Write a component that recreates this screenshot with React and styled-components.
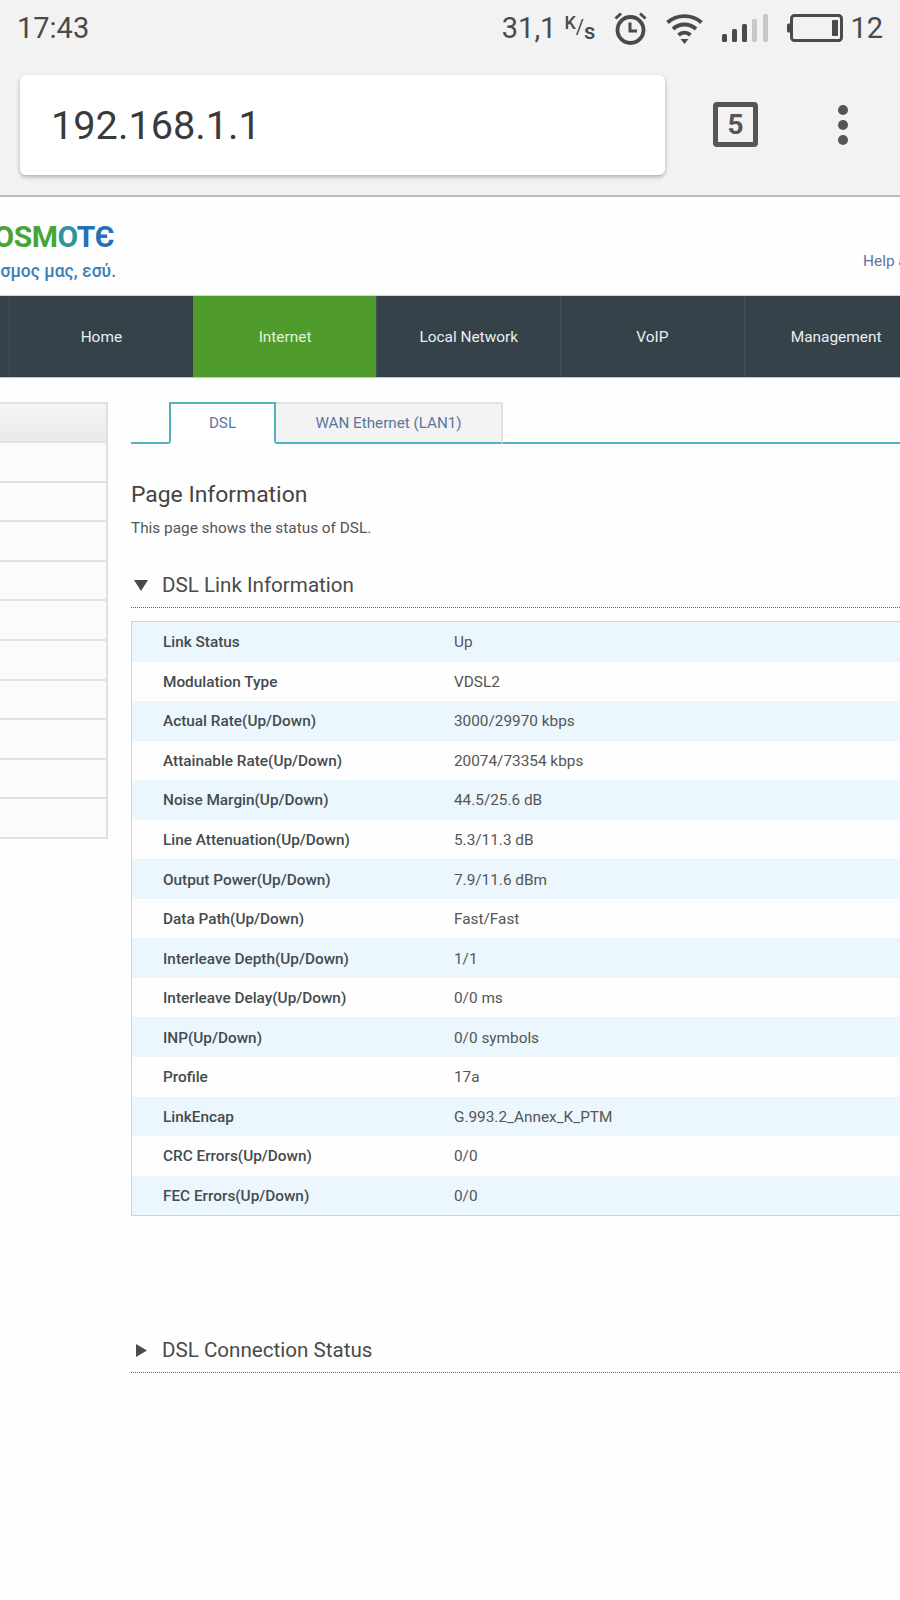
import styled, { createGlobalStyle } from "styled-components";

const GlobalStyle = createGlobalStyle`
  html, body {
    margin: 0;
    padding: 0;
    background: #fefefe;
  }
  body {
    font-family: Roboto, "Liberation Sans", sans-serif;
    color: #444;
  }
`;

const Screen = styled.div`
  width: 900px;
  height: 1600px;
  overflow: hidden;
  background: #fefefe;
`;

const Chrome = styled.div`
  height: 195px;
  background: #f2f2f2;
  border-bottom: 2px solid #bdbdbd;
`;

const StatusBar = styled.div`
  height: 56px;
  padding: 0 17px 0 17px;
  display: flex;
  align-items: center;
  color: #4a4a4a;
  font-size: 29px;
`;

const Clock = styled.span`
  margin-right: auto;
`;

const Speed = styled.span`
  display: block;
  margin-right: 19px;
  white-space: nowrap;
`;

const SpeedUnit = styled.span`
  margin-left: 8px;
  font-size: 18px;
  font-weight: 500;
  vertical-align: 9px;
`;

const SpeedSlash = styled.span`
  font-size: 20px;
  vertical-align: 4px;
`;

const SpeedSub = styled.span`
  font-size: 22px;
  font-weight: 500;
  vertical-align: -1px;
`;

const BatteryLevel = styled.span`
  margin-left: 7px;
`;

const StatusIcon = styled.svg`
  display: block;
  margin-right: ${(props) => props.$gap}px;
  flex: none;
`;

const UrlRow = styled.div`
  height: 139px;
  display: flex;
  align-items: flex-start;
  padding: 19px 0 0 20px;
`;

const UrlBar = styled.div`
  width: 645px;
  height: 100px;
  box-sizing: border-box;
  padding-left: 31px;
  display: flex;
  align-items: center;
  background: #fff;
  border-radius: 6px;
  box-shadow: 0 2px 4px rgba(0, 0, 0, 0.28);
  font-size: 39.7px;
  color: #3a3a3a;
`;

const TabCount = styled.div`
  margin: 27px 0 0 48px;
  width: 45px;
  height: 45px;
  box-sizing: border-box;
  border: 5px solid #555;
  border-radius: 4px;
  display: flex;
  align-items: center;
  justify-content: center;
  font-family: "Liberation Sans Narrow", Roboto, sans-serif;
  font-size: 28px;
  font-weight: 700;
  color: #555;
`;

const MenuDots = styled.div`
  margin: 30px 0 0 80px;
  display: flex;
  flex-direction: column;
  gap: 5px;
`;

const MenuDot = styled.span`
  width: 10px;
  height: 10px;
  border-radius: 50%;
  background: #555;
`;

const Header = styled.div`
  height: 98px;
  display: flex;
  justify-content: space-between;
  overflow: hidden;
`;

const Logo = styled.div`
  width: 118px;
  display: flex;
  flex-direction: column;
  align-items: flex-end;
  overflow: hidden;
  padding-top: 23px;
  white-space: nowrap;
`;

const LogoName = styled.div`
  flex: none;
  font-size: 30px;
  line-height: 34px;
  font-weight: 700;
  letter-spacing: -0.5px;
  color: #46a535;
  margin-right: 4px;
`;

const LogoPart = styled.span`
  color: ${(props) => props.$color};
`;

const Tagline = styled.div`
  flex: none;
  font-size: 17.5px;
  line-height: 24px;
  font-weight: 500;
  color: #3a7fb8;
  margin-top: 5px;
  margin-right: 2px;
`;

const HelpLink = styled.a`
  width: 37px;
  margin-top: 55px;
  overflow: hidden;
  white-space: nowrap;
  font-size: 15.4px;
  line-height: 18px;
  color: #5a76a0;
`;

const Nav = styled.div`
  height: 83px;
  padding-left: 9px;
  display: flex;
  background: #36424a;
  border-top: 1px solid #d0d4d6;
  border-bottom: 1px solid #b9c9cf;
  box-sizing: border-box;
`;

const NavItem = styled.div`
  flex: none;
  width: 183.7px;
  box-sizing: border-box;
  display: flex;
  align-items: center;
  justify-content: center;
  font-size: 15.4px;
  color: ${(props) => (props.$active ? "#e4f2dc" : "#eceeef")};
  background: ${(props) => (props.$active ? "#4f9c2c" : "transparent")};
  border-left: 1px solid ${(props) => (props.$active ? "#4f9c2c" : "#434f57")};
`;

const Content = styled.div`
  padding-top: 24px;
  display: flex;
  align-items: flex-start;
`;

const Sidebar = styled.div`
  flex: none;
  width: 108px;
  box-sizing: border-box;
  border: 2px solid #e0e0e0;
  border-left: 0;
`;

const SideHead = styled.div`
  height: 37px;
  background: linear-gradient(#f5f5f5, #e9e9e9);
`;

const SideRow = styled.div`
  height: 39.6px;
  box-sizing: border-box;
  border-top: 2px solid #e2e2e2;
  background: #fbfbfb;
`;

const Main = styled.div`
  margin-left: 23px;
  flex: none;
  width: 769px;
`;

const Tabs = styled.div`
  height: 42px;
  box-sizing: border-box;
  padding-left: 38px;
  display: flex;
  border-bottom: 2px solid #54b1c2;
`;

const Tab = styled.div`
  height: 42px;
  box-sizing: border-box;
  display: flex;
  align-items: center;
  justify-content: center;
  font-size: 15.2px;
  color: #5a76a0;
  width: ${(props) => props.$width}px;
  background: ${(props) => (props.$active ? "#fff" : "#f3f3f3")};
  border: 2px solid ${(props) => (props.$active ? "#54b1c2" : "#e2e2e2")};
  border-left-width: ${(props) => (props.$active ? 2 : 0)}px;
  border-bottom: ${(props) => (props.$active ? "2px solid #fff" : "2px solid #54b1c2")};
`;

const PageTitle = styled.h1`
  margin: 38px 0 0;
  font-size: 22.9px;
  line-height: 26px;
  font-weight: 400;
  color: #444;
`;

const PageNote = styled.p`
  margin: 11px 0 0;
  font-size: 15.35px;
  line-height: 18px;
  color: #555;
`;

const SectionHead = styled.div`
  margin-top: ${(props) => props.$top}px;
  height: 37px;
  display: flex;
  align-items: center;
  padding-bottom: 4px;
  border-bottom: 1px dotted #666;
  font-size: 20.6px;
  color: #4a4a4a;
`;

const Arrow = styled.svg`
  display: block;
  flex: none;
  margin: 2px ${(props) => props.$right}px 0 ${(props) => props.$left}px;
`;

const InfoTable = styled.div`
  margin-top: 13px;
  border: 1px solid #c9d5dc;
  border-right: 0;
`;

const InfoRow = styled.div`
  height: 39.55px;
  box-sizing: border-box;
  display: flex;
  align-items: center;
  padding: 1px 0 0 31px;
  font-size: 15.35px;
  background: ${(props) => (props.$striped ? "#ecf7fd" : "#fefefe")};
`;

const InfoLabel = styled.span`
  width: 291px;
  font-weight: 500;
  color: #454b4f;
`;

const InfoValue = styled.span`
  color: #555;
`;

const menuItems = ["Home", "Internet", "Local Network", "VoIP", "Management"];

const rows = [
  ["Link Status", "Up"],
  ["Modulation Type", "VDSL2"],
  ["Actual Rate(Up/Down)", "3000/29970 kbps"],
  ["Attainable Rate(Up/Down)", "20074/73354 kbps"],
  ["Noise Margin(Up/Down)", "44.5/25.6 dB"],
  ["Line Attenuation(Up/Down)", "5.3/11.3 dB"],
  ["Output Power(Up/Down)", "7.9/11.6 dBm"],
  ["Data Path(Up/Down)", "Fast/Fast"],
  ["Interleave Depth(Up/Down)", "1/1"],
  ["Interleave Delay(Up/Down)", "0/0 ms"],
  ["INP(Up/Down)", "0/0 symbols"],
  ["Profile", "17a"],
  ["LinkEncap", "G.993.2_Annex_K_PTM"],
  ["CRC Errors(Up/Down)", "0/0"],
  ["FEC Errors(Up/Down)", "0/0"],
];

function AlarmIcon() {
  return (
    <StatusIcon $gap={19} width="33" height="33" viewBox="0 0 33 33" fill="none" stroke="#4a4a4a">
      <circle cx="16.5" cy="18" r="13" strokeWidth="3.8" />
      <path d="M16 10.5V19H23" strokeWidth="3" />
      <path d="M1.5 6.5L7 1.5M31.5 6.5L26 1.5" strokeWidth="3" />
    </StatusIcon>
  );
}

function WifiIcon() {
  return (
    <StatusIcon $gap={19} width="37" height="32" viewBox="0 0 37 32" fill="none" stroke="#4a4a4a" strokeWidth="3.8">
      <path d="M1.5 10.5C11 2 26 2 35.5 10.5" />
      <path d="M7 17C13.5 11 23.5 11 30 17" />
      <path d="M12.5 23C16 19.7 21 19.7 24.5 23" />
      <path d="M14.5 27H22.5L18.5 32Z" fill="#4a4a4a" stroke="none" />
    </StatusIcon>
  );
}

function SignalIcon() {
  return (
    <StatusIcon $gap={19} width="46" height="28" viewBox="0 0 46 28">
      <rect x="0" y="20" width="5" height="8" rx="1.5" fill="#4a4a4a" />
      <rect x="10" y="15" width="5" height="13" rx="1.5" fill="#4a4a4a" />
      <rect x="20" y="10" width="5" height="18" rx="1.5" fill="#4a4a4a" />
      <rect x="30" y="5" width="5" height="23" rx="1.5" fill="#c8c8c8" />
      <rect x="41" y="0" width="5" height="28" rx="1.5" fill="#c8c8c8" />
    </StatusIcon>
  );
}

function BatteryIcon() {
  return (
    <StatusIcon $gap={0} width="56" height="28" viewBox="0 0 56 28">
      <rect x="0" y="9.5" width="4" height="9" rx="1.5" fill="#4a4a4a" />
      <rect x="4.5" y="1.5" width="50" height="25" rx="3" fill="none" stroke="#4a4a4a" strokeWidth="3" />
      <rect x="45" y="6" width="6" height="16" rx="1" fill="#4a4a4a" />
    </StatusIcon>
  );
}

export default function App() {
  return (
    <Screen>
      <GlobalStyle />
      <Chrome>
        <StatusBar>
          <Clock>17:43</Clock>
          <Speed>
            31,1
            <SpeedUnit>K</SpeedUnit>
            <SpeedSlash>/</SpeedSlash>
            <SpeedSub>s</SpeedSub>
          </Speed>
          <AlarmIcon />
          <WifiIcon />
          <SignalIcon />
          <BatteryIcon />
          <BatteryLevel>12</BatteryLevel>
        </StatusBar>
        <UrlRow>
          <UrlBar>192.168.1.1</UrlBar>
          <TabCount>5</TabCount>
          <MenuDots>
            <MenuDot />
            <MenuDot />
            <MenuDot />
          </MenuDots>
        </UrlRow>
      </Chrome>
      <Header>
        <Logo>
          <LogoName>
            COSM<LogoPart $color="#2f93a0">O</LogoPart>
            <LogoPart $color="#2472b4">TЄ</LogoPart>
          </LogoName>
          <Tagline>Ο κόσμος μας, εσύ.</Tagline>
        </Logo>
        <HelpLink>Help and Support</HelpLink>
      </Header>
      <Nav>
        {menuItems.map((item) => (
          <NavItem key={item} $active={item === "Internet"}>
            {item}
          </NavItem>
        ))}
      </Nav>
      <Content>
        <Sidebar>
          <SideHead />
          {Array.from({ length: 10 }, (_, idx) => (
            <SideRow key={idx} />
          ))}
        </Sidebar>
        <Main>
          <Tabs>
            <Tab $active $width={107}>
              DSL
            </Tab>
            <Tab $width={227}>WAN Ethernet (LAN1)</Tab>
          </Tabs>
          <PageTitle>Page Information</PageTitle>
          <PageNote>This page shows the status of DSL.</PageNote>
          <SectionHead $top={29}>
            <Arrow $left={3} $right={14} width="14" height="11" viewBox="0 0 14 11">
              <path d="M0 0H14L7 11Z" fill="#4a4a4a" />
            </Arrow>
            DSL Link Information
          </SectionHead>
          <InfoTable>
            {rows.map(([label, value], idx) => (
              <InfoRow key={label} $striped={idx % 2 === 0}>
                <InfoLabel>{label}</InfoLabel>
                <InfoValue>{value}</InfoValue>
              </InfoRow>
            ))}
          </InfoTable>
          <SectionHead $top={115}>
            <Arrow $left={5} $right={15} width="11" height="13" viewBox="0 0 11 13">
              <path d="M0 0L11 6.5L0 13Z" fill="#4a4a4a" />
            </Arrow>
            DSL Connection Status
          </SectionHead>
        </Main>
      </Content>
    </Screen>
  );
}
